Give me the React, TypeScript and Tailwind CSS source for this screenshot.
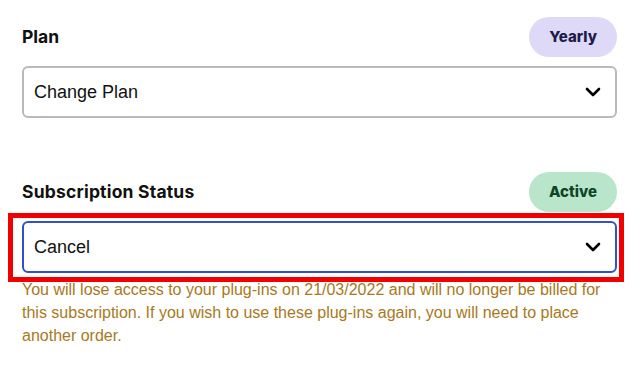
import { ChevronDown } from "lucide-react";

const Badge = ({ label, className }: { label: string; className: string }) => (
  <span
    className={`inline-flex h-10 items-center rounded-full px-5 font-['Inter',sans-serif] text-[15px] font-extrabold ${className}`}
  >
    {label}
  </span>
);

const SelectBox = ({ value, className }: { value: string; className: string }) => (
  <div
    className={`flex h-[52px] items-center justify-between rounded-md border-2 bg-white pl-[10px] pr-[10px] ${className}`}
  >
    <span className="font-['Liberation_Sans',Arial,sans-serif] text-[18px] text-[#111]">{value}</span>
    <ChevronDown size={24} strokeWidth={2.6} className="text-black" />
  </div>
);

export default function App() {
  return (
    <div className="h-[369px] w-[639px] bg-white px-[22px] pt-[17px]">
      {/* Plan */}
      <div className="flex h-10 items-center justify-between">
        <h3 className="font-['Inter',sans-serif] text-[17.5px] font-bold text-[#111]">Plan</h3>
        <Badge label="Yearly" className="bg-[#ddd9f7] text-[#1e1b4b]" />
      </div>
      <div className="mt-[9px]">
        <SelectBox value="Change Plan" className="border-[#b9b9b9]" />
      </div>

      {/* Subscription status */}
      <div className="mt-[54px] flex h-10 items-center justify-between">
        <h3 className="font-['Inter',sans-serif] text-[17.5px] font-bold tracking-[0.2px] text-[#111]">
          Subscription Status
        </h3>
        <Badge label="Active" className="bg-[#b9e6cb] text-[#0d4526]" />
      </div>
      <div className="relative mt-[9px]">
        <SelectBox value="Cancel" className="border-[#3450c8]" />
        {/* highlight annotation */}
        <div className="pointer-events-none absolute -bottom-[9px] -left-[14px] -right-[7px] -top-[8px] border-[5px] border-[#f20000]" />
      </div>
      <p className="mt-[5px] font-['Liberation_Sans',Arial,sans-serif] text-[16px] leading-[23px] text-[#a8791c]">
        You will lose access to your plug-ins on 21/03/2022 and will no longer be billed for
        <br />
        this subscription. If you wish to use these plug-ins again, you will need to place
        <br />
        another order.
      </p>
    </div>
  );
}
